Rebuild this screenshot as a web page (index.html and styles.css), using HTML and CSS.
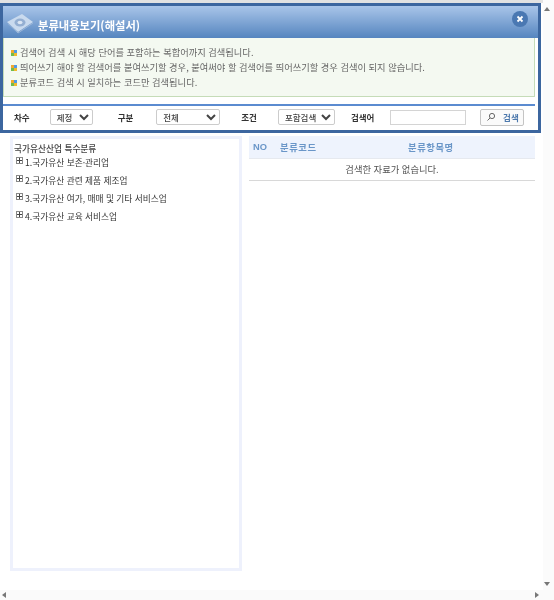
FILE: index.html
```html
<!DOCTYPE html>
<html lang="ko">
<head>
<meta charset="utf-8">
<title>분류내용보기(해설서)</title>
<link rel="stylesheet" href="styles.css">
</head>
<body>
<div class="frame">
  <div class="viewport">
    <main class="main">
      <section class="modal">
        <header class="modal-head">
          <svg class="eye" width="26" height="20" viewBox="0 0 26 20"><path d="M0 8 L15 0 L26 8 L11 18 Z" fill="#c9daee"/><path d="M1 9.5 L11 19 L26 9" fill="none" stroke="#9db8d9" stroke-width="1"/><ellipse cx="13" cy="8.5" rx="5.5" ry="4" fill="#94afd2"/><ellipse cx="13" cy="8.5" rx="2.5" ry="1.8" fill="#dbe6f3"/></svg>
          <h1 class="modal-title">분류내용보기(해설서)</h1>
          <span class="close"><svg width="8" height="8" viewBox="0 0 8 8"><path d="M1.5 1.5 L6.5 6.5 M6.5 1.5 L1.5 6.5" stroke="#fff" stroke-width="1.8"/></svg></span>
        </header>
        <div class="notes">
          <p class="note"><i class="bullet"></i>검색어 검색 시 해당 단어를 포함하는 복합어까지 검색됩니다.</p>
          <p class="note"><i class="bullet"></i>띄어쓰기 해야 할 검색어를 붙여쓰기할 경우, 붙여써야 할 검색어를 띄어쓰기할 경우 검색이 되지 않습니다.</p>
          <p class="note"><i class="bullet"></i>분류코드 검색 시 일치하는 코드만 검색됩니다.</p>
        </div>
        <form class="filters">
          <label class="flabel l1">차수</label>
          <select class="sel s1"><option>제정</option></select>
          <label class="flabel l2">구분</label>
          <select class="sel s2"><option>전체</option></select>
          <label class="flabel l3">조건</label>
          <select class="sel s3"><option>포함검색</option></select>
          <label class="flabel l4">검색어</label>
          <input class="query" type="text">
          <button class="btn" type="button"><svg width="10" height="10" viewBox="0 0 10 10"><circle cx="6" cy="4" r="2.6" fill="none" stroke="#666" stroke-width="1"/><path d="M4 6 L1.5 8.5" stroke="#666" stroke-width="1"/></svg><span>검색</span></button>
        </form>
      </section>
      <div class="content">
        <aside class="tree">
          <div class="tree-title">국가유산산업 특수분류</div>
          <ul class="tree-list">
            <li class="tree-item"><i class="plus"></i>1.국가유산 보존·관리업</li>
            <li class="tree-item"><i class="plus"></i>2.국가유산 관련 제품 제조업</li>
            <li class="tree-item"><i class="plus"></i>3.국가유산 여가, 매매 및 기타 서비스업</li>
            <li class="tree-item"><i class="plus"></i>4.국가유산 교육 서비스업</li>
          </ul>
        </aside>
        <section class="results">
          <div class="thead"><span class="c-no">NO</span><span class="c-code">분류코드</span><span class="c-name">분류항목명</span></div>
          <div class="empty">검색한 자료가 없습니다.</div>
        </section>
      </div>
    </main>
    <div class="vbar"><i class="arrow up"></i><i class="arrow down"></i></div>
  </div>
  <div class="hbar"><i class="arrow left"></i><i class="arrow right"></i></div>
</div>
</body>
</html>
```
FILE: styles.css
```css
* { box-sizing: border-box; }
html, body { margin: 0; padding: 0; height: 100%; background: #fff; }
body { font-family: "Noto Sans CJK KR", "Noto Sans", sans-serif; font-size: 8.7px; color: #444; overflow: hidden; }
.frame { width: 554px; height: 600px; display: flex; flex-direction: column; filter: blur(0.35px); }
.viewport { flex: 1; display: flex; min-height: 0; }
.main { width: 543px; padding-top: 3px; background: linear-gradient(#e2e2e2 0, #e2e2e2 3px, #fff 3px); }
.modal { width: 541px; height: 130px; border: 3px solid #3c669f; background: #fff; display: flex; flex-direction: column; }
.modal-head { height: 32px; display: flex; align-items: center; padding: 0 10px 0 4px; background: linear-gradient(#a9c5e9, #5585bf); }
.eye { margin-top: 4px; flex: none; }
.modal-title { flex: 1; margin: 6px 0 0 5px; font-size: 11.3px; font-weight: 700; color: #fff; }
.close { width: 16px; height: 16px; border-radius: 50%; background: #4a78b2; display: flex; align-items: center; justify-content: center; margin-top: -7px; }
.notes { height: 59px; margin: 0 3px 0 0; padding: 7px 0 0 7px; background: #f4f9f1; border: 1px solid #c5dcb8; border-top: 0; }
.note { margin: 0; height: 15px; line-height: 15px; font-size: 9.25px; color: #666; display: flex; align-items: center; white-space: nowrap; }
.bullet { width: 6px; height: 6px; margin-right: 3px; flex: none; background:
  linear-gradient(#f0a830, #f0a830) 0 0/3px 3px no-repeat,
  linear-gradient(#4f9ae8, #4f9ae8) 100% 0/3px 3px no-repeat,
  linear-gradient(#72bb4c, #72bb4c) 0 100%/3px 3px no-repeat,
  linear-gradient(#f0b830, #f0b830) 100% 100%/3px 3px no-repeat; }
.filters { margin: 7px 3px 0 0; border-top: 2px solid #5b8bd0; height: 26px; padding-bottom: 2px; display: flex; align-items: center; font-size: 8.5px; }
.flabel { font-weight: 700; color: #333; }
.l1 { margin-left: 11px; }
.l2 { margin-left: 25px; }
.l3 { margin-left: 21px; }
.l4 { margin-left: 16px; }
.sel { height: 16px; padding: 0 0 0 2px; font: inherit; font-weight: 500; color: #444; background: #fff; border: 1px solid #ccc; border-radius: 2px; }
.s1 { width: 43px; margin-left: 20px; }
.s2 { width: 64px; margin-left: 23px; }
.s3 { width: 57px; margin-left: 21px; }
.query { width: 76px; height: 15px; margin-left: 16px; border: 1px solid #d4d4d4; background: #fff; padding: 0; }
.btn { width: 44px; height: 17px; margin-left: 14px; padding: 0; display: flex; align-items: center; justify-content: center; gap: 7px; font: inherit; font-weight: 700; color: #4d79ad; background: #fafafa; border: 1px solid #c4c4c4; border-radius: 2px; }
.content { display: flex; padding: 3px 0 0 10px; }
.tree { width: 232px; height: 435px; border: 3px solid #eef1fc; padding: 3px 0 0 1px; }
.tree-title { height: 11px; line-height: 14px; font-weight: 500; color: #444; }
.tree-list { list-style: none; margin: 0; padding: 0; }
.tree-item { height: 18px; display: flex; align-items: center; padding-left: 2px; color: #333; white-space: nowrap; }
.plus { width: 7px; height: 7px; margin-right: 2px; margin-top: -3px; border: 1px solid #888; flex: none; background:
  linear-gradient(#444, #444) center/5px 1px no-repeat,
  linear-gradient(#444, #444) center/1px 5px no-repeat; }
.results { width: 286px; margin-left: 7px; }
.thead { height: 23px; display: flex; align-items: center; background: #eef3fd; border-bottom: 1px solid #e6e9ef; font-size: 9.3px; font-weight: 700; color: #6a96c8; }
.c-no { width: 31px; padding-left: 4px; font-family: "Liberation Sans", sans-serif; }
.c-code { width: 128px; letter-spacing: .6px; }
.c-name { flex: 1; letter-spacing: .6px; }
.empty { height: 22px; line-height: 21px; text-align: center; font-size: 9.3px; color: #555; border-bottom: 1px solid #d8d8d8; }
.vbar { width: 11px; position: relative; background: #fbfbfb; }
.hbar { height: 10px; position: relative; background: #fafafa; }
.arrow { position: absolute; width: 0; height: 0; border: 3px solid transparent; }
.up { top: 7px; left: 1px; border-width: 0 3.5px 4px; border-bottom-color: #777; }
.down { bottom: 4px; left: 1px; border-width: 4px 3.5px 0; border-top-color: #777; }
.left { left: 2px; top: 2px; border-width: 3.5px 4px 3.5px 0; border-right-color: #777; }
.right { right: 15px; top: 2px; border-width: 3.5px 0 3.5px 4px; border-left-color: #777; }
```
